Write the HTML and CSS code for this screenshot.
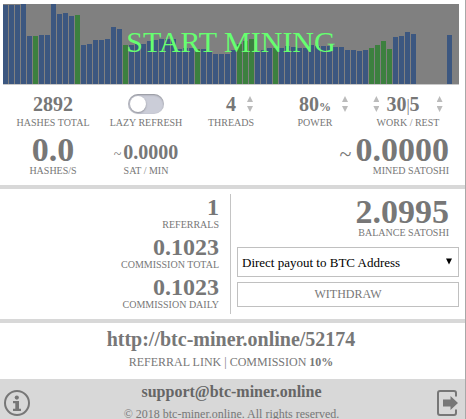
FILE: index.html
```
<!DOCTYPE html>
<html lang="en">
<head>
    <meta charset="UTF-8">
    <meta name="viewport" content="width=device-width, initial-scale=1.0">
    <title>BTC Miner</title>
    <link rel="stylesheet" href="styles.css">
</head>
<body>
    <button type="button" class="chart" id="start">
        <span class="bars" id="bars"></span>
        <span class="start-text">START MINING</span>
    </button>

    <section class="stats">
        <div class="stat">
            <div class="value">2892</div>
            <div class="label">HASHES TOTAL</div>
        </div>
        <div class="stat">
            <div class="value"><input type="checkbox" class="toggle" id="lazy"></div>
            <label class="label" for="lazy">LAZY REFRESH</label>
        </div>
        <div class="stat">
            <div class="value stepper">
                <span class="number">4</span>
                <span class="arrows"><button type="button" class="up" aria-label="More threads"></button><button type="button" class="down" aria-label="Fewer threads"></button></span>
            </div>
            <div class="label">THREADS</div>
        </div>
        <div class="stat">
            <div class="value stepper">
                <span class="number">80<span class="unit">%</span></span>
                <span class="arrows"><button type="button" class="up" aria-label="More power"></button><button type="button" class="down" aria-label="Less power"></button></span>
            </div>
            <div class="label">POWER</div>
        </div>
        <div class="stat">
            <div class="value range">
                <span class="arrows"><button type="button" class="up" aria-label="More work"></button><button type="button" class="down" aria-label="Less work"></button></span>
                <span class="number">30<span class="pipe">|</span>5</span>
                <span class="arrows"><button type="button" class="up" aria-label="More rest"></button><button type="button" class="down" aria-label="Less rest"></button></span>
            </div>
            <div class="label">WORK / REST</div>
        </div>
        <div class="stat big">
            <div class="value">0.0</div>
            <div class="label">HASHES/S</div>
        </div>
        <div class="stat big">
            <div class="value small"><span class="tilde">~</span>0.0000</div>
            <div class="label">SAT / MIN</div>
        </div>
        <div class="stat big mined">
            <div class="value"><span class="tilde">~</span>0.0000</div>
            <div class="label">MINED SATOSHI</div>
        </div>
    </section>

    <section class="account">
        <div class="referrals">
            <div>
                <div class="value">1</div>
                <div class="label">REFERRALS</div>
            </div>
            <div>
                <div class="value">0.1023</div>
                <div class="label">COMMISSION TOTAL</div>
            </div>
            <div>
                <div class="value">0.1023</div>
                <div class="label">COMMISSION DAILY</div>
            </div>
        </div>
        <div class="payout">
            <div class="balance">
                <div class="value">2.0995</div>
                <div class="label">BALANCE SATOSHI</div>
            </div>
            <div class="select-wrap">
                <select id="method" aria-label="Payout method">
                    <option>Direct payout to BTC Address</option>
                </select>
                <svg class="caret" width="6" height="7" viewBox="0 0 6 7"><path d="M0 0.5h6L3 6.500z"/></svg>
            </div>
            <button type="button" class="withdraw">WITHDRAW</button>
        </div>
    </section>

    <section class="link">
        <a class="ref-url" href="#">http://btc-miner.online/52174</a>
        <div class="ref-label">REFERRAL LINK | COMMISSION <b>10%</b></div>
    </section>

    <footer class="footer">
        <button type="button" class="icon" aria-label="Info">
            <svg width="26" height="26" viewBox="0 0 26 26">
                <circle cx="13" cy="13" r="12" fill="none" stroke="#777" stroke-width="2"/>
                <circle cx="12.8" cy="7.6" r="2.1" fill="#777"/>
                <path d="M9 11h6v7.8h2V21H9v-2.2h2.3v-5.5H9z" fill="#777"/>
            </svg>
        </button>
        <div class="contact">
            <a class="support" href="#">support@btc-miner.online</a>
            <div class="copyright">© 2018 btc-miner.online. All rights reserved.</div>
        </div>
        <button type="button" class="icon" aria-label="Log out">
            <svg width="22" height="26" viewBox="0 0 22 26">
                <path d="M19 6.500V3a2 2 0 0 0-2-2H3a2 2 0 0 0-2 2v20a2 2 0 0 0 2 2h14a2 2 0 0 0 2-2v-3.500" fill="none" stroke="#777" stroke-width="2"/>
                <path d="M6 9.500h7.500V6L21 13l-7.500 7v-3.500H6z" fill="#777"/>
            </svg>
        </button>
    </footer>

    <script type="text/javascript">
        // Hash rate history, 80 = full height of the chart
        const rates = [
            79, 79, 79, 80, 48, 48, 49, 49, 80, 70, 71, 68, 69, 39, 40, 44, 44, 45, 57,
            55, 39, 39, 40, 40, 43, 44, 45, 45, 45, 35, 36, 36, 35, 35, 33, 30, 30, 30,
            34, 40, 43, 45, 32, 34, 36, 36, 36, 38, 37, 36, 36, 39, 38, 38, 38, 37, 37,
            34, 34, 33, 34, 36, 39, 43, 35, 47, 48, 52, 50, 0, 0, 0, 0, 0, 49, 0
        ];
        const accepted = [5, 12, 20, 32, 39, 40, 41, 45, 61, 62, 63, 64];

        const bars = document.getElementById('bars');
        rates.forEach(function (rate, i) {
            const bar = document.createElement('span');
            bar.className = accepted.includes(i) ? 'bar accepted' : 'bar';
            bar.style.height = (rate / 80 * 100) + '%';
            bars.appendChild(bar);
        });
    </script>
</body>
</html>
```
FILE: styles.css
```
* {
    box-sizing: border-box;
}
html {
    overflow: hidden;
}
body {
    position: relative;
    margin: 0;
    min-height: 100vh;
    border-right: 1px solid #a8a8a8;
    background-color: #ffffff;
    color: #777777;
    font-family: "Liberation Serif", "Times New Roman", serif;
}
/* drag grip on the window edge */
body::after {
    content: "";
    position: absolute;
    top: 30px;
    right: -1px;
    width: 1px;
    height: 12px;
    background: repeating-linear-gradient(#555555 0, #555555 2px, #c8c8c8 2px, #c8c8c8 5px);
}
button {
    margin: 0;
    padding: 0;
    border: none;
    background: none;
    color: inherit;
    font-family: inherit;
    cursor: pointer;
}
a {
    color: inherit;
    text-decoration: none;
}
.value {
    font-weight: bold;
}
.label {
    display: block;
    font-size: 10px;
    line-height: 12px;
}

/* hash rate chart */
.chart {
    display: grid;
    width: calc(100% - 9px);
    margin: 4px 6px 0 3px;
    background-color: #808080;
    border-bottom: 1px solid #c8c8c8;
}
.bars, .start-text {
    grid-area: 1 / 1;
}
.bars {
    display: flex;
    align-items: flex-end;
    height: 80px;
}
.bar {
    flex: 1;
    margin-right: 1px;
    background-color: #3c5780;
}
.accepted {
    background-color: #3c803f;
}
.start-text {
    align-self: center;
    z-index: 1;
    padding-bottom: 4px;
    font-size: 30px;
    line-height: 34px;
    color: #66ff70;
}

/* miner stats */
.stats {
    display: grid;
    grid-template-columns: 92fr 94fr 76fr 92fr 94fr;
    row-gap: 5px;
    padding: 7px 10px 8px 7px;
    text-align: center;
    border-bottom: 4px solid #d8d8d8;
}
.stat .value {
    display: flex;
    justify-content: center;
    align-items: center;
    height: 24px;
    font-size: 20px;
    line-height: 24px;
}
.stat .label {
    line-height: 14px;
}
.big .value {
    align-items: baseline;
    height: 30px;
    font-size: 34px;
    line-height: 30px;
}
.big .label {
    line-height: 12px;
}
.big .small {
    font-size: 20px;
    line-height: 34px;
}
.tilde {
    margin-right: 4px;
    font-size: 22px;
    font-weight: normal;
}
.small .tilde {
    margin-right: 2px;
    font-size: 14px;
}
.mined {
    grid-column: 3 / 6;
    padding-right: 6px;
    text-align: right;
}
.mined .value {
    justify-content: flex-end;
}
.stat .stepper {
    display: grid;
    grid-template-columns: 1fr auto 1fr;
}
.stepper .number {
    grid-column: 2;
}
.stepper .arrows {
    margin-left: 11px;
}
.range .number {
    margin: 0 17px 0 7px;
}
.unit {
    font-size: 12px;
    line-height: 12px;
}
.pipe {
    font-size: 16px;
    font-weight: normal;
    line-height: 16px;
}
.arrows {
    display: flex;
    flex-direction: column;
    gap: 4px;
    width: 6px;
}
.up, .down {
    width: 6px;
    height: 6px;
    background-color: #bbbbbb;
    clip-path: polygon(50% 0, 100% 100%, 0 100%);
}
.down {
    clip-path: polygon(0 0, 100% 0, 50% 100%);
}
.toggle {
    appearance: none;
    width: 36px;
    height: 20px;
    margin: 0;
    padding: 2px;
    border-radius: 10px;
    background-color: #cbcdd8;
    box-shadow: inset 0 1px 2px rgba(0, 0, 0, 0.3);
}
.toggle::before {
    content: "";
    display: block;
    width: 16px;
    height: 16px;
    border-radius: 50%;
    background-color: #ffffff;
    box-shadow: 0 1px 2px rgba(0, 0, 0, 0.3);
}
.toggle:checked::before {
    margin-left: 16px;
}

/* referrals and payout */
.account {
    display: grid;
    grid-template-columns: 1fr 1fr;
    padding: 5px 6px 5px 3px;
    border-bottom: 4px solid #d8d8d8;
}
.referrals {
    display: flex;
    flex-direction: column;
    gap: 4px;
    padding: 1px 11px 3px 0;
    text-align: right;
    border-right: 1px solid #c4c4c4;
}
.referrals .value {
    font-size: 24px;
    line-height: 24px;
}
.payout {
    padding: 3px 0 0 6px;
}
.balance {
    padding-right: 10px;
    margin-bottom: 8px;
    text-align: right;
}
.balance .value {
    font-size: 34px;
    line-height: 30px;
}
.select-wrap {
    position: relative;
    margin-bottom: 5px;
}
select {
    appearance: none;
    display: block;
    width: 100%;
    height: 30px;
    padding: 0 20px 0 4px;
    border: 1px solid #c0c0c0;
    border-radius: 0;
    background-color: #ffffff;
    color: #000000;
    font-family: inherit;
    font-size: 13px;
}
.caret {
    position: absolute;
    top: 11px;
    right: 7px;
    pointer-events: none;
}
.withdraw {
    display: block;
    width: 100%;
    height: 25px;
    border: 1px solid #c0c0c0;
    font-size: 12px;
}

/* referral link */
.link {
    padding: 4px 3px 9px 0;
    text-align: center;
}
.ref-url {
    display: block;
    margin-bottom: 3px;
    font-size: 20px;
    font-weight: bold;
    line-height: 24px;
}
.ref-label {
    font-size: 12px;
    line-height: 16px;
}

.footer {
    display: flex;
    justify-content: space-between;
    align-items: flex-start;
    padding: 3px 6px 0 4px;
    background-color: #d8d8d8;
}
.icon {
    padding-top: 8px;
}
.icon svg {
    display: block;
}
.contact {
    padding-right: 4px;
    text-align: center;
}
.support {
    display: block;
    margin-bottom: 4px;
    font-size: 16px;
    font-weight: bold;
    line-height: 20px;
    color: #666666;
}
.copyright {
    font-size: 12px;
    line-height: 16px;
}
```
